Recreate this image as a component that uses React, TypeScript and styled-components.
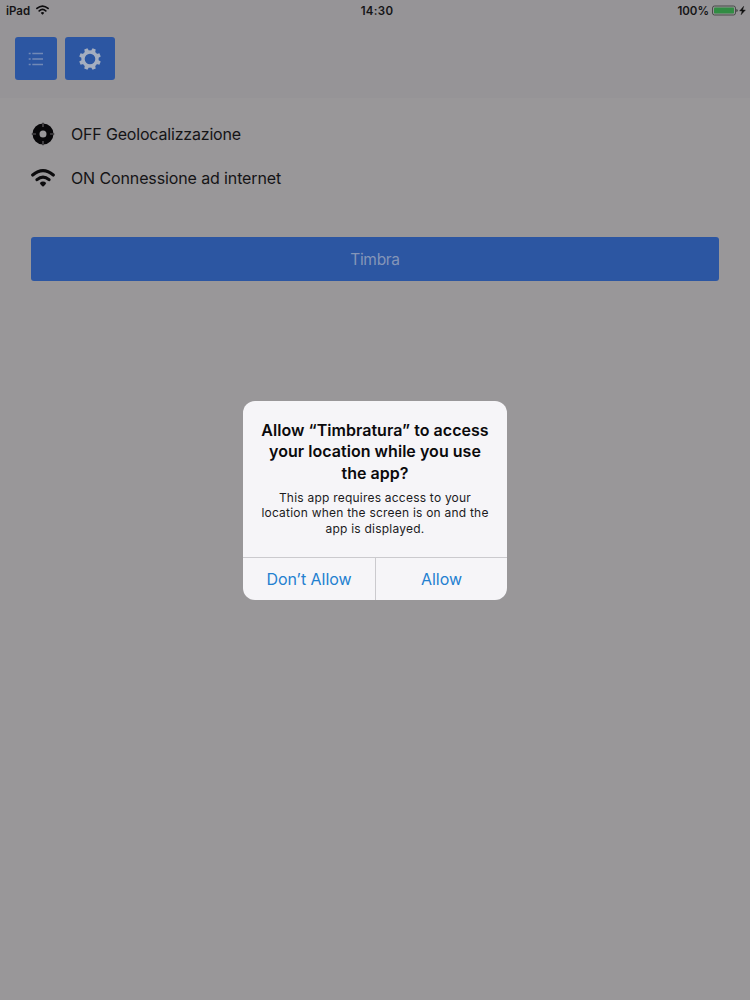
import React from 'react';
import styled, { createGlobalStyle } from 'styled-components';

const GlobalStyle = createGlobalStyle`
  * { box-sizing: border-box; }
  html, body { margin: 0; padding: 0; background: #999799; }
  body { font-family: Inter, "Liberation Sans", sans-serif; color: #151416; }
  button { font: inherit; border: 0; margin: 0; padding: 0; }
  svg { display: block; flex: none; }
`;

const Screen = styled.div`
  width: 750px;
  height: 1000px;
  display: flex;
  flex-direction: column;
  position: relative;
  overflow: hidden;
  background: #999799;
`;

const Header = styled.header`
  height: 98px;
  background: #969497;
`;

const StatusBar = styled.div`
  height: 22px;
  padding: 0 4px 0 6px;
  display: grid;
  grid-template-columns: 1fr auto 1fr;
  align-items: center;
  font-size: 11.5px;
  font-weight: 600;
  line-height: 22px;
`;

const StatusGroup = styled.div<{ $end?: boolean }>`
  display: flex;
  align-items: center;
  gap: ${({ $end }) => ($end ? '3px' : '6px')};
  justify-content: ${({ $end }) => ($end ? 'flex-end' : 'flex-start')};
  svg { margin-bottom: 2px; }
`;

const Clock = styled.span`
  letter-spacing: 0.3px;
  padding-left: 2px;
`;

const Toolbar = styled.nav`
  display: flex;
  gap: 8px;
  padding: 15px 15.4px 0;
`;

const ToolButton = styled.button<{ $width: number }>`
  width: ${({ $width }) => $width}px;
  height: 43px;
  border-radius: 3px;
  background: #2c56a2;
  color: #a5aebf;
  display: flex;
  align-items: center;
  justify-content: center;
`;

const Content = styled.main`
  padding: 14px 31px 0;
`;

const StatusRow = styled.div<{ $spacing: number }>`
  height: 44px;
  display: flex;
  align-items: center;
  gap: 16px;
  font-size: 16px;
  letter-spacing: ${({ $spacing }) => $spacing}px;
`;

const PrimaryButton = styled.button`
  width: 688px;
  height: 44px;
  margin-top: 37px;
  border-radius: 3px;
  background: #2c56a2;
  color: #8495b8;
  font-size: 15.5px;
  letter-spacing: -0.3px;
`;

const Overlay = styled.div`
  position: absolute;
  inset: 0;
  display: flex;
  align-items: center;
  justify-content: center;
`;

const Dialog = styled.section`
  width: 264px;
  height: 199px;
  border-radius: 12px;
  background: #f6f5f8;
  overflow: hidden;
  display: flex;
  flex-direction: column;
  text-align: center;
`;

const DialogBody = styled.div`
  flex: 1;
  padding-top: 19px;
  white-space: nowrap;
`;

const Title = styled.h1`
  margin: 0;
  font-size: 16px;
  line-height: 21.7px;
  letter-spacing: 0.04px;
  font-weight: 600;
  color: #0b0a0c;
`;

const Message = styled.p`
  margin: 5px 0 0;
  font-size: 12px;
  line-height: 15.7px;
  letter-spacing: 0.22px;
  color: #1c1b1d;
`;

const Actions = styled.div`
  height: 43px;
  display: grid;
  grid-template-columns: 1fr 1fr;
  border-top: 1px solid #cbcace;
`;

const Action = styled.button`
  background: transparent;
  color: #2380d0;
  font-size: 16px;
  letter-spacing: -0.05px;
  & + & { border-left: 1px solid #cbcace; }
`;

const WifiIcon = ({ width, height }: { width: number; height: number }) => (
  <svg width={width} height={height} viewBox="0 0 24 18" fill="none" stroke="#0c0b0d" strokeWidth="3.1" strokeLinecap="round">
    <path d="M1.7 6Q12-2.6 22.3 6M6 10.7Q12 5.4 18 10.7" />
    <path d="M8.8 14Q12 11.2 15.2 14Q14.4 16.2 12 17.8Q9.6 16.2 8.8 14Z" fill="#0c0b0d" stroke="none" />
  </svg>
);

const LocateIcon = () => (
  <svg width="24" height="24" viewBox="0 0 24 24" fill="none">
    <path d="M12 .6V4M12 20v3.4M.6 12H4M20 12h3.4" stroke="#39373a" strokeWidth="1" />
    <circle cx="12" cy="12" r="7" stroke="#080709" strokeWidth="7" />
    <path d="M12 2v3M12 19v3M2 12h3M19 12h3" stroke="#656366" strokeWidth="1.2" />
  </svg>
);

const ListIcon = () => (
  <svg width="16" height="14" viewBox="0 0 16 14" fill="none" stroke="#7189b6" strokeWidth="1.3">
    <path d="M4.3 1.5H15M4.3 7H15M4.3 12.5H15" />
    <path d="M.7 1.5h2M.7 7h2M.7 12.5h2" />
  </svg>
);

const GearIcon = () => (
  <svg width="22" height="22" viewBox="-11 -11 22 22" fill="none" stroke="currentColor">
    <circle r="7" strokeWidth="3.4" />
    {[22.5, 67.5, 112.5, 157.5, 202.5, 247.5, 292.5, 337.5].map((angle) => (
      <path key={angle} d="M-2.2-8L-1.7-10.9H1.7L2.2-8Z" fill="currentColor" stroke="none" transform={`rotate(${angle})`} />
    ))}
  </svg>
);

const BatteryIcon = () => (
  <svg width="34" height="11" viewBox="0 0 34 11">
    <rect x=".5" y="1" width="23" height="9" rx="2" fill="none" stroke="#353a36" strokeWidth=".8" />
    <rect x="2" y="2.4" width="20" height="6.2" rx=".8" fill="#318c43" />
    <path d="M24.4 4v3q1.3-.4 1.3-1.5T24.4 4Z" fill="#353a36" />
    <path d="M31.7 1.2L27.6 6h2.5l-1 3.8L33.4 5h-2.7Z" fill="#111" stroke="#111" strokeWidth=".4" />
  </svg>
);

export default function App() {
  return (
    <>
      <GlobalStyle />
      <Screen>
        <Header>
          <StatusBar>
            <StatusGroup><span>iPad</span><WifiIcon width={13} height={10} /></StatusGroup>
            <Clock>14:30</Clock>
            <StatusGroup $end><span>100%</span><BatteryIcon /></StatusGroup>
          </StatusBar>
          <Toolbar>
            <ToolButton $width={42} aria-label="Menu"><ListIcon /></ToolButton>
            <ToolButton $width={49.6} aria-label="Settings"><GearIcon /></ToolButton>
          </Toolbar>
        </Header>
        <Content>
          <StatusRow $spacing={-0.18}><LocateIcon /><span>OFF Geolocalizzazione</span></StatusRow>
          <StatusRow $spacing={-0.12}><WifiIcon width={24} height={18} /><span>ON Connessione ad internet</span></StatusRow>
          <PrimaryButton>Timbra</PrimaryButton>
        </Content>
        <Overlay>
          <Dialog role="dialog">
            <DialogBody>
              <Title>Allow “Timbratura” to access<br />your location while you use<br />the app?</Title>
              <Message>This app requires access to your<br />location when the screen is on and the<br />app is displayed.</Message>
            </DialogBody>
            <Actions>
              <Action>Don’t Allow</Action>
              <Action>Allow</Action>
            </Actions>
          </Dialog>
        </Overlay>
      </Screen>
    </>
  );
}
